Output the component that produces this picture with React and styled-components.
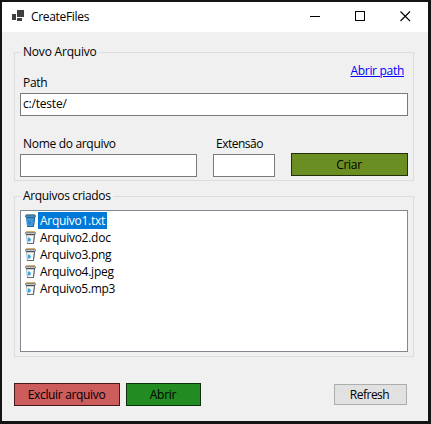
import React from "react";
import styled, { createGlobalStyle } from "styled-components";

const Global = createGlobalStyle`
  * { box-sizing: border-box; }
  body { margin: 0; background: #141416; overflow: hidden; }
  input, button { font: inherit; color: inherit; border-radius: 0; margin: 0; }
`;

const Window = styled.div`
  width: 431px;
  height: 424px;
  border: solid #141416;
  border-width: 2px 3px 3px 2px;
  background: #f0f0f0;
  color: #000;
  font: 12px/16px "Open Sans", "Noto Sans", sans-serif;
  display: flex;
  flex-direction: column;
`;

const TitleBar = styled.header`
  height: 30px;
  flex: none;
  background: #fff;
  display: flex;
  align-items: center;
  padding: 0 17px 0 10px;
`;

const Text = styled.span`
  white-space: pre;
  letter-spacing: ${(p) => p.$spacing ?? -0.28}px;
`;

const Title = styled(Text)`
  margin-left: 7px;
  padding-bottom: 1px;
`;

const WindowControls = styled.div`
  margin-left: auto;
  display: flex;
  gap: 34px;
  padding-bottom: 2px;
`;

const Content = styled.main`
  flex: 1;
  padding: 12px 14px 0 12px;
  display: flex;
  flex-direction: column;
`;

const Group = styled.fieldset`
  margin: 0 0 7px;
  min-width: 0;
  height: ${(p) => p.$height}px;
  padding: 0 5px;
  border: 1px solid #dcdcdc;
  display: flex;
  flex-direction: column;
`;

const Legend = styled.legend`
  padding: 0 2px;
  margin-left: 1px;
  height: 16px;
  display: flex;
`;

const LinkRow = styled.div`
  display: flex;
  justify-content: flex-end;
  height: 12px;
  margin-top: 3px;
  padding-right: 4px;
`;

const PathLink = styled.a`
  color: #0000ff;
  white-space: pre;
  letter-spacing: -0.3px;
  text-decoration: underline;
  text-underline-offset: 1px;
  text-decoration-thickness: 1px;
`;

const Field = styled.label`
  display: flex;
  flex-direction: column;
  width: ${(p) => p.$width}px;
`;

const FieldLabel = styled(Text)`
  height: 18px;
  padding-left: 3px;
`;

const Input = styled.input`
  width: 100%;
  height: 23px;
  border: 1px solid #7a7a7a;
  background: #fff;
  padding: 0 2px 2px;
  letter-spacing: -0.2px;
  outline: none;
`;

const CreateRow = styled.div`
  display: flex;
  gap: 16px;
  align-items: flex-end;
  margin-top: 20px;
`;

const Button = styled.button`
  width: ${(p) => p.$width}px;
  height: ${(p) => p.$height ?? 23}px;
  background: ${(p) => p.$fill};
  border: 1px solid ${(p) => p.$edge};
  padding: 0 1px 0 0;
  display: flex;
  align-items: center;
  justify-content: center;
`;

const CreateButton = styled(Button)`
  margin-bottom: 1px;
`;

const FileList = styled.ul`
  list-style: none;
  margin: 6px 0 0;
  padding: 1px 3px;
  height: 142px;
  border: 1px solid #828790;
  background: #fff;
`;

const FileItem = styled.li`
  height: 17px;
  display: flex;
  align-items: center;
`;

const FileName = styled(Text)`
  height: 17px;
  line-height: 18px;
  margin-left: 1px;
  padding: 0 2px 0 2px;
  color: ${(p) => (p.$selected ? "#fff" : "#000")};
  background: ${(p) => (p.$selected ? "#0078d7" : "transparent")};
`;

const Actions = styled.footer`
  display: flex;
  align-items: center;
  gap: 6px;
  margin-top: 19px;
  padding-right: 7px;
`;

const RefreshButton = styled(Button)`
  margin-left: auto;
  padding-right: 2px;
`;

const AppGlyph = styled.svg`
  margin-bottom: 3px;
`;

const AppIcon = () => (
  <AppGlyph width="12" height="11" viewBox="0 0 12 11" fill="#3f3f3f" shapeRendering="crispEdges">
    <path d="M0 4h4v6H0zM5 0h7v7H5zM5 8h5v3H5z" />
  </AppGlyph>
);

const MinimizeIcon = () => (
  <svg width="11" height="11" shapeRendering="crispEdges">
    <path d="M0 5h10v1H0z" />
  </svg>
);

const MaximizeIcon = () => (
  <svg width="11" height="11" shapeRendering="crispEdges">
    <rect x=".5" y=".5" width="9" height="9" fill="none" stroke="#000" />
  </svg>
);

const CloseIcon = () => (
  <svg width="11" height="11">
    <path d="M.5.5l9.500 9.500M10 .5l-9.500 9.500" stroke="#000" strokeWidth="1.1" />
  </svg>
);

const BinIcon = ({ selected }) => (
  <svg width="13" height="15" viewBox="0 0 13 15">
    <path d="M2.500 5h8l-1 8.500h-6z" fill={selected ? "#4796d3" : "#f7f9fa"} stroke={selected ? "#3d86bf" : "#a4acb0"} />
    <path d="M4 7.500h1.500l1.500 2-1 2H4z" fill={selected ? "#2186d5" : "#38a5e0"} />
    <path d="M10.500 5l-1 8" fill="none" stroke={selected ? "#2a6b9e" : "#5b6165"} />
    <path d="M3 13.500h7" stroke={selected ? "#24659a" : "#666c70"} />
    <path d="M1.500 2.500h10v1.500h-10z" fill={selected ? "#559dd2" : "#fff"} stroke={selected ? "#3c7ca9" : "#878a89"} />
    <path d="M2 4.500h9" stroke={selected ? "#24659a" : "#4c5155"} />
    <path d="M2 1.500h9" stroke={selected ? "#7f9c96" : "#d6ae6b"} />
  </svg>
);

const files = [
  { name: "Arquivo1.txt", spacing: -0.28 },
  { name: "Arquivo2.doc", spacing: -0.26 },
  { name: "Arquivo3.png", spacing: -0.28 },
  { name: "Arquivo4.jpeg", spacing: -0.26 },
  { name: "Arquivo5.mp3", spacing: -0.3 },
];

export default function App() {
  return (
    <>
      <Global />
      <Window>
        <TitleBar>
          <AppIcon />
          <Title $spacing={-0.32}>CreateFiles</Title>
          <WindowControls>
            <MinimizeIcon />
            <MaximizeIcon />
            <CloseIcon />
          </WindowControls>
        </TitleBar>
        <Content>
          <Group $height={137}>
            <Legend><Text $spacing={-0.2}>Novo Arquivo</Text></Legend>
            <LinkRow><PathLink>Abrir path</PathLink></LinkRow>
            <Field $width={388}>
              <FieldLabel>Path</FieldLabel>
              <Input defaultValue="c:/teste/" />
            </Field>
            <CreateRow>
              <Field $width={177}>
                <FieldLabel $spacing={-0.31}>Nome do arquivo</FieldLabel>
                <Input />
              </Field>
              <Field $width={62}>
                <FieldLabel $spacing={-0.5}>Extensão</FieldLabel>
                <Input />
              </Field>
              <CreateButton $width={117} $fill="#6b8e23" $edge="#24300c">
                <Text>Criar</Text>
              </CreateButton>
            </CreateRow>
          </Group>
          <Group $height={169}>
            <Legend><Text $spacing={-0.33}>Arquivos criados</Text></Legend>
            <FileList>
              {files.map((file, i) => (
                <FileItem key={file.name}>
                  <BinIcon selected={i === 0} />
                  <FileName $selected={i === 0} $spacing={file.spacing}>{file.name}</FileName>
                </FileItem>
              ))}
            </FileList>
          </Group>
          <Actions>
            <Button $width={106} $fill="#cd5c5c" $edge="#471a1a"><Text $spacing={-0.34}>Excluir arquivo</Text></Button>
            <Button $width={75} $fill="#228b22" $edge="#0c300c"><Text>Abrir</Text></Button>
            <RefreshButton $width={73} $height={21} $fill="#e1e1e1" $edge="#adadad"><Text $spacing={-0.5}>Refresh</Text></RefreshButton>
          </Actions>
        </Content>
      </Window>
    </>
  );
}
